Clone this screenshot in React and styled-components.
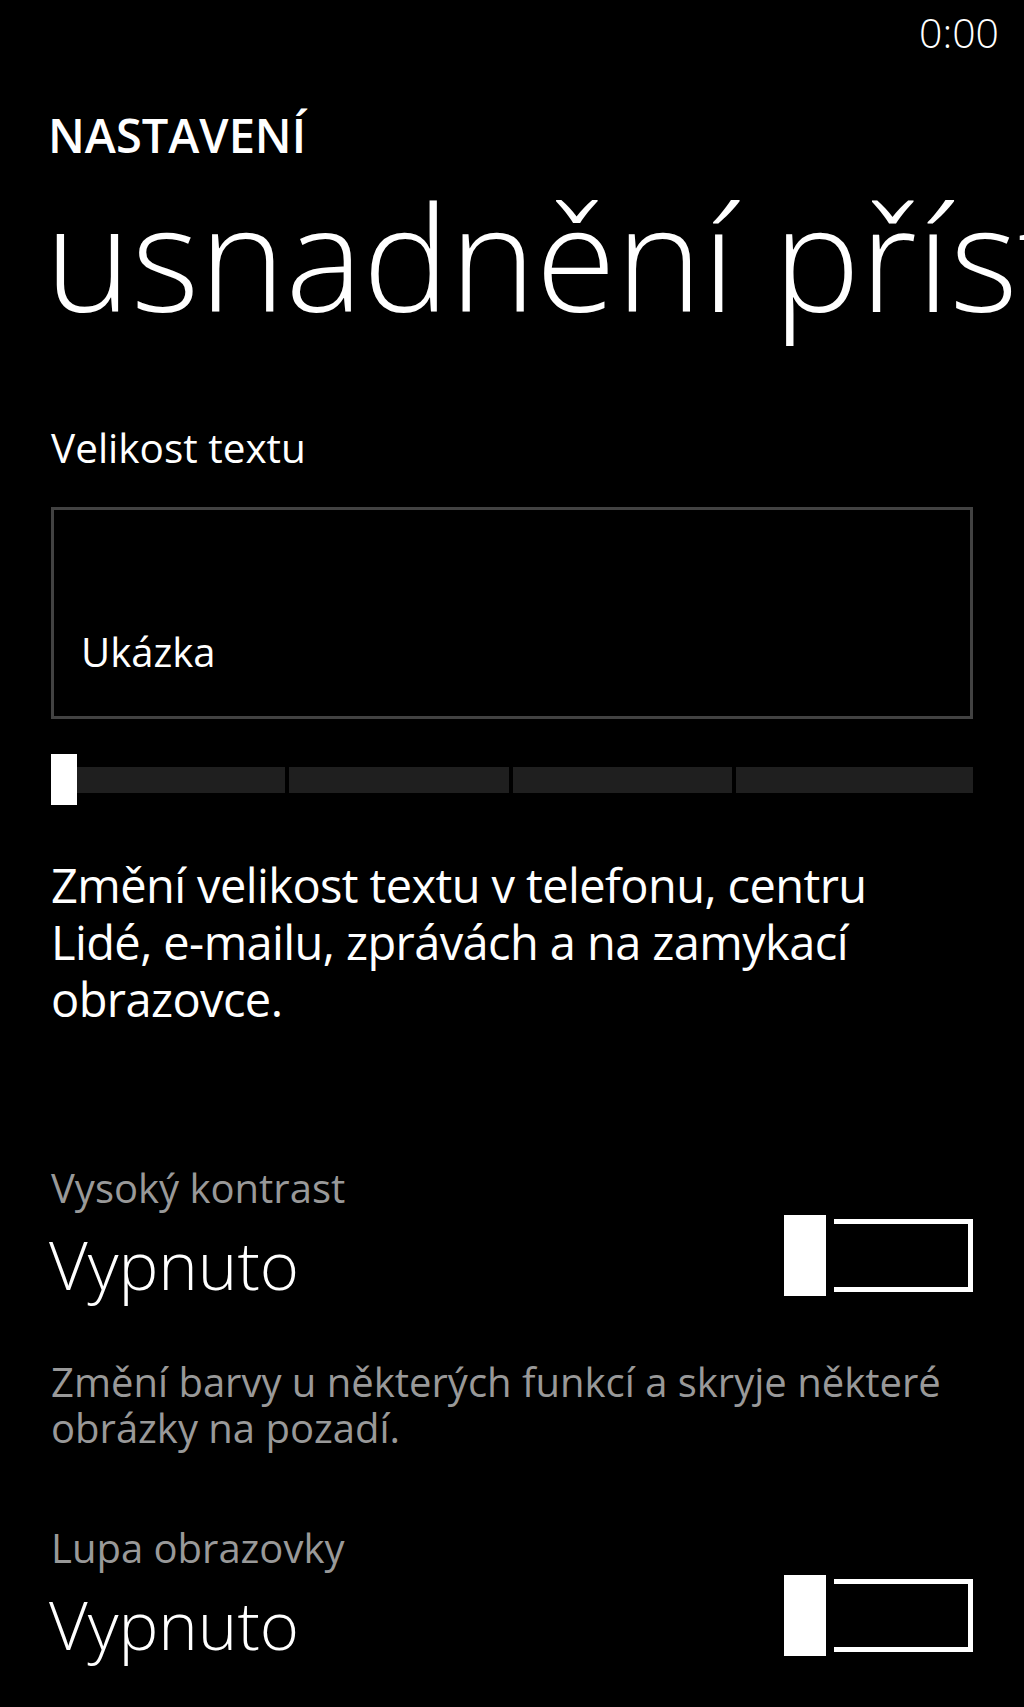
import React from 'react';
import styled, { createGlobalStyle } from 'styled-components';

const GlobalStyle = createGlobalStyle`
  html, body {
    margin: 0;
    padding: 0;
    background: #000;
  }
  body {
    font-family: "Open Sans", "Noto Sans", sans-serif;
    color: #fff;
  }
`;

const segments = [233, 220, 219, 236];

const App = () => {
  return (
    <Page>
      <GlobalStyle />
      <StatusBar>0:00</StatusBar>
      <AppTitle>NASTAVENÍ</AppTitle>
      <PageTitle>usnadnění přístupu</PageTitle>

      <FieldLabel>Velikost textu</FieldLabel>
      <Preview>
        <PreviewText>Ukázka</PreviewText>
      </Preview>
      <Slider>
        <Track>
          {segments.map((w, i) => (
            <Segment key={i} $grow={w} />
          ))}
        </Track>
        <Thumb />
      </Slider>
      <Description>
        Změní velikost textu v telefonu, centru
        <br />
        Lidé, e-mailu, zprávách a na zamykací
        <br />
        obrazovce.
      </Description>

      <SettingLabel $gap={137}>Vysoký kontrast</SettingLabel>
      <ToggleRow>
        <ToggleValue>Vypnuto</ToggleValue>
        <Toggle>
          <ToggleTrack />
          <ToggleThumb />
        </Toggle>
      </ToggleRow>
      <Hint>
        Změní barvy u některých funkcí a skryje některé
        <br />
        obrázky na pozadí.
      </Hint>

      <SettingLabel $gap={74}>Lupa obrazovky</SettingLabel>
      <ToggleRow>
        <ToggleValue>Vypnuto</ToggleValue>
        <Toggle>
          <ToggleTrack />
          <ToggleThumb />
        </Toggle>
      </ToggleRow>
    </Page>
  );
};

const Page = styled.div`
  width: 1024px;
  min-height: 1707px;
  box-sizing: border-box;
  padding: 0 51px;
  overflow: hidden;
  background: #000;
`;

const StatusBar = styled.div`
  height: 64px;
  line-height: 64px;
  margin-right: -26px;
  text-align: right;
  font-size: 41px;
  font-weight: 300;
`;

const AppTitle = styled.div`
  margin-top: 48px;
  margin-left: -3px;
  font-size: 47px;
  line-height: 46px;
  font-weight: 600;
`;

const PageTitle = styled.div`
  margin-top: 18px;
  margin-left: -6px;
  font-size: 146px;
  line-height: 160px;
  font-weight: 300;
  white-space: nowrap;
`;

const FieldLabel = styled.div`
  margin-top: 88px;
  font-size: 40.5px;
  line-height: 48px;
`;

const Preview = styled.div`
  margin-top: 35px;
  height: 212px;
  box-sizing: border-box;
  border: 3px solid #424242;
  padding: 0 27px 40px;
  display: flex;
  align-items: flex-end;
`;

const PreviewText = styled.div`
  font-size: 40px;
  line-height: 48px;
`;

const Slider = styled.div`
  position: relative;
  margin-top: 35px;
  height: 51px;
  display: flex;
  align-items: center;
`;

const Track = styled.div`
  flex: 1;
  height: 26px;
  display: flex;
  gap: 4px;
`;

const Segment = styled.div`
  flex: ${(p) => p.$grow} 1 0;
  background: #1f1f1f;
`;

const Thumb = styled.div`
  position: absolute;
  left: 0;
  top: 0;
  width: 26px;
  height: 51px;
  background: #fff;
`;

const Description = styled.div`
  margin-top: 52px;
  font-size: 47px;
  line-height: 57px;
  letter-spacing: -0.6px;
  white-space: nowrap;
`;

const SettingLabel = styled.div`
  margin-top: ${(p) => p.$gap}px;
  font-size: 40px;
  line-height: 46px;
  color: #999;
`;

const ToggleRow = styled.div`
  margin-top: 4px;
  display: flex;
  justify-content: space-between;
  align-items: flex-start;
`;

const ToggleValue = styled.div`
  margin-top: 9px;
  margin-left: -2px;
  font-size: 67px;
  line-height: 80px;
  font-weight: 300;
`;

const Toggle = styled.div`
  position: relative;
  width: 189px;
  height: 81px;
`;

const ToggleTrack = styled.div`
  margin-top: 4px;
  height: 73px;
  box-sizing: border-box;
  border: 5px solid #fff;
`;

const ToggleThumb = styled.div`
  position: absolute;
  left: 0;
  top: 0;
  width: 42px;
  height: 81px;
  background: #fff;
  border-right: 8px solid #000;
`;

const Hint = styled.div`
  margin-top: 55px;
  font-size: 40px;
  line-height: 46px;
  color: #999;
  white-space: nowrap;
`;

export default App;
